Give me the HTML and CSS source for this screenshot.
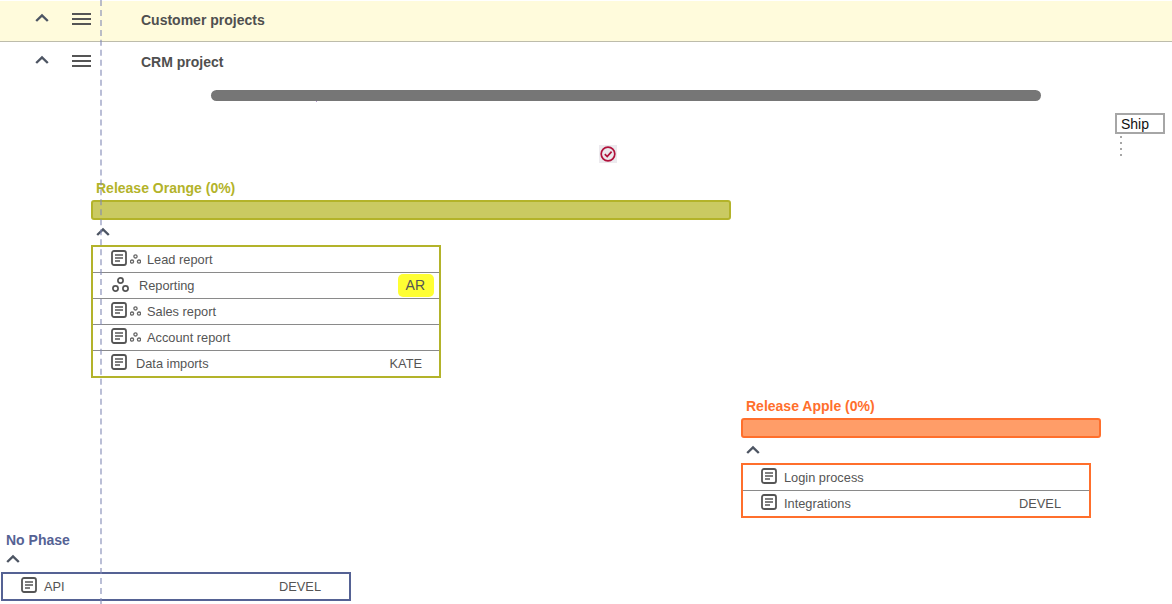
FILE: index.html
```html
<!DOCTYPE html>
<html lang="en">
<head>
<meta charset="utf-8">
<title>Project timeline</title>
<link rel="stylesheet" href="styles.css">
</head>
<body>
<svg class="defs" width="0" height="0" aria-hidden="true">
  <symbol id="chev" viewBox="0 0 14 10"><path d="M1.2 8 7 2.4 12.8 8" fill="none" stroke="currentColor" stroke-width="2.4"/></symbol>
  <symbol id="menu" viewBox="0 0 20 14"><path d="M0 2h19M0 7h19M0 12h19" fill="none" stroke="currentColor" stroke-width="2"/></symbol>
  <symbol id="doc" viewBox="0 0 16 16"><rect x="1" y="1" width="14" height="14" rx="2" fill="none" stroke="currentColor" stroke-width="1.8"/><path d="M4 5h8M4 8h8M4 11h5" fill="none" stroke="currentColor" stroke-width="1.5"/></symbol>
  <symbol id="org" viewBox="0 0 18 16"><g fill="none" stroke="currentColor" stroke-width="1.7"><circle cx="9.5" cy="4.5" r="2.6"/><circle cx="4.5" cy="12.5" r="2.6"/><circle cx="14.5" cy="12.5" r="2.6"/></g></symbol>
  <symbol id="org-s" viewBox="0 0 11 10"><g fill="none" stroke="currentColor" stroke-width="1.3"><circle cx="5.5" cy="2.4" r="1.6"/><circle cx="2" cy="7.6" r="1.6"/><circle cx="9" cy="7.6" r="1.6"/></g></symbol>
</svg>
<main class="page">
  <header class="row row-customer">
    <svg class="chev"><use href="#chev"/></svg>
    <svg class="menu"><use href="#menu"/></svg>
    <h1 class="row-title">Customer projects</h1>
  </header>
  <header class="row row-crm">
    <svg class="chev"><use href="#chev"/></svg>
    <svg class="menu"><use href="#menu"/></svg>
    <h2 class="row-title">CRM project</h2>
  </header>

  <div class="summary-bar"></div>
  <div class="ship-flag">Ship</div>
  <div class="ship-dots"></div>
  <div class="status-check">
    <svg viewBox="0 0 16 16" width="16" height="16"><circle cx="8" cy="8" r="6.8" fill="none" stroke="#b0123b" stroke-width="1.7"/><path d="M4.8 8.2 7.2 10.6 11.6 5.6" fill="none" stroke="#b0123b" stroke-width="1.7"/></svg>
  </div>

  <section class="phase phase-orange">
    <h3 class="phase-title">Release Orange (0%)</h3>
    <div class="phase-bar"></div>
    <svg class="chev phase-chev"><use href="#chev"/></svg>
    <ul class="items">
      <li class="item"><svg class="doc"><use href="#doc"/></svg><svg class="org-small"><use href="#org-s"/></svg><span class="name name-tight">Lead report</span></li>
      <li class="item"><svg class="org"><use href="#org"/></svg><span class="name name-org">Reporting</span><span class="owner owner-hl">AR</span></li>
      <li class="item"><svg class="doc"><use href="#doc"/></svg><svg class="org-small"><use href="#org-s"/></svg><span class="name name-tight">Sales report</span></li>
      <li class="item"><svg class="doc"><use href="#doc"/></svg><svg class="org-small"><use href="#org-s"/></svg><span class="name name-tight">Account report</span></li>
      <li class="item"><svg class="doc"><use href="#doc"/></svg><span class="name">Data imports</span><span class="owner">KATE</span></li>
    </ul>
  </section>

  <section class="phase phase-apple">
    <h3 class="phase-title">Release Apple (0%)</h3>
    <div class="phase-bar"></div>
    <svg class="chev phase-chev"><use href="#chev"/></svg>
    <ul class="items">
      <li class="item"><svg class="doc"><use href="#doc"/></svg><span class="name">Login process</span></li>
      <li class="item"><svg class="doc"><use href="#doc"/></svg><span class="name">Integrations</span><span class="owner">DEVEL</span></li>
    </ul>
  </section>

  <section class="phase phase-none">
    <h3 class="phase-title">No Phase</h3>
    <svg class="chev phase-chev"><use href="#chev"/></svg>
    <ul class="items">
      <li class="item"><svg class="doc"><use href="#doc"/></svg><span class="name">API</span><span class="owner">DEVEL</span></li>
    </ul>
  </section>

  <div class="today-line"></div>
</main>
</body>
</html>
```
FILE: styles.css
```css
* { box-sizing: border-box; }
html, body { margin: 0; padding: 0; }
body {
  background: #fff;
  color: #555;
  font-family: "Liberation Sans", Arial, sans-serif;
  font-size: 12.8px;
  overflow: hidden;
}
.defs { position: absolute; }
.page { position: relative; width: 1172px; height: 604px; overflow: hidden; padding-top: 1px; }

.row { display: flex; align-items: center; padding-left: 35px; }
.row-customer { height: 41px; background: #fffbdc; border-bottom: 1px solid #bdbcab; padding-bottom: 3px; }
.row-crm { height: 37px; }
.chev { width: 14px; height: 10px; color: #4d5563; flex: none; }
.menu { width: 20px; height: 14px; color: #555; flex: none; margin-left: 23px; }
.row-title { margin: 0 0 0 49px; font-size: 14px; font-weight: 700; color: #4f4f4f; line-height: 16px; }
.row-customer .row-title { padding-top: 1px; }
.row-customer .chev { margin-top: -3px; }
.row-customer .menu { margin-top: -2px; }
.row-crm .row-title { padding-top: 3px; }
.row-crm .chev { margin-top: -2px; }
.row-crm .menu { margin-top: 0; }

.summary-bar { position: absolute; left: 211px; top: 90px; width: 830px; height: 11px; background: #767676; border-radius: 6px; }
.summary-bar::after { content: ""; position: absolute; left: 105px; top: 11px; width: 1px; height: 1px; background: #b49ad0; }
.ship-flag { position: absolute; left: 1115px; top: 113px; width: 50px; height: 21px; border: 2px solid #a6a6a6; color: #111; font-size: 14px; line-height: 18px; padding-left: 4px; background: #fff; }
.ship-dots { position: absolute; left: 1120px; top: 136px; width: 2px; height: 20px; background: repeating-linear-gradient(to bottom, #a6a6a6 0 2px, transparent 2px 6px); }
.status-check { position: absolute; left: 599px; top: 145px; width: 18px; height: 18px; background: #eceaee; display: flex; align-items: center; justify-content: center; }

.phase { position: absolute; }
.phase-orange { left: 91px; top: 180px; width: 350px; --c: #b3b32a; --fill: #caca62; }
.phase-apple { left: 741px; top: 398px; width: 350px; --c: #ff6f2c; --fill: #ff9d68; }
.phase-none { left: 1px; top: 532px; width: 350px; --c: #556294; }

.phase-title { margin: 0 0 4px 5px; height: 16px; color: var(--c); font-size: 14px; font-weight: 700; line-height: 16px; }
.phase-bar { height: 20px; background: var(--fill); border: 2px solid var(--c); border-radius: 3px; }
.phase-apple .phase-bar, .phase-orange .phase-bar { margin-bottom: 7px; }
.phase-apple .phase-bar { width: 360px; }
.phase-orange .phase-bar { width: 640px; }
.phase-chev { display: block; margin: 0 0 8px 5px; }
.phase-none .phase-chev { margin: 6px 0 8px 5px; }

.items { list-style: none; margin: 0; padding: 0; border: 2px solid var(--c); }
.item { display: flex; align-items: center; height: 26px; padding: 0 18px; border-top: 1px solid #8a8a8a; }
.item:first-child { border-top: 0; height: 25px; }
.doc { width: 16px; height: 16px; color: #555; flex: none; margin-top: -3px; }
.org { width: 18px; height: 16px; color: #555; flex: none; margin-top: -3px; }
.org-small { width: 11px; height: 10px; color: #666; flex: none; margin: -2px 0 0 3px; }
.name { margin-left: 9px; color: #555; line-height: 16px; }
.name-tight { margin-left: 6px; }
.name-org { margin-left: 10px; }
.phase-apple .name, .phase-none .name { margin-left: 7px; }
.owner { margin-left: auto; color: #555; line-height: 22px; }
.owner-hl { background: #ffff33; border-radius: 5px; padding: 0 9px 0 8px; font-size: 14px; line-height: 23px; margin-right: -13px; }
.phase-orange .item:last-child .owner { margin-right: -1px; }
.phase-apple .owner, .phase-none .owner { margin-right: 10px; }

.today-line { position: absolute; left: 100px; top: 0; bottom: 0; border-left: 2px dashed rgba(130, 136, 180, 0.55); }
```
